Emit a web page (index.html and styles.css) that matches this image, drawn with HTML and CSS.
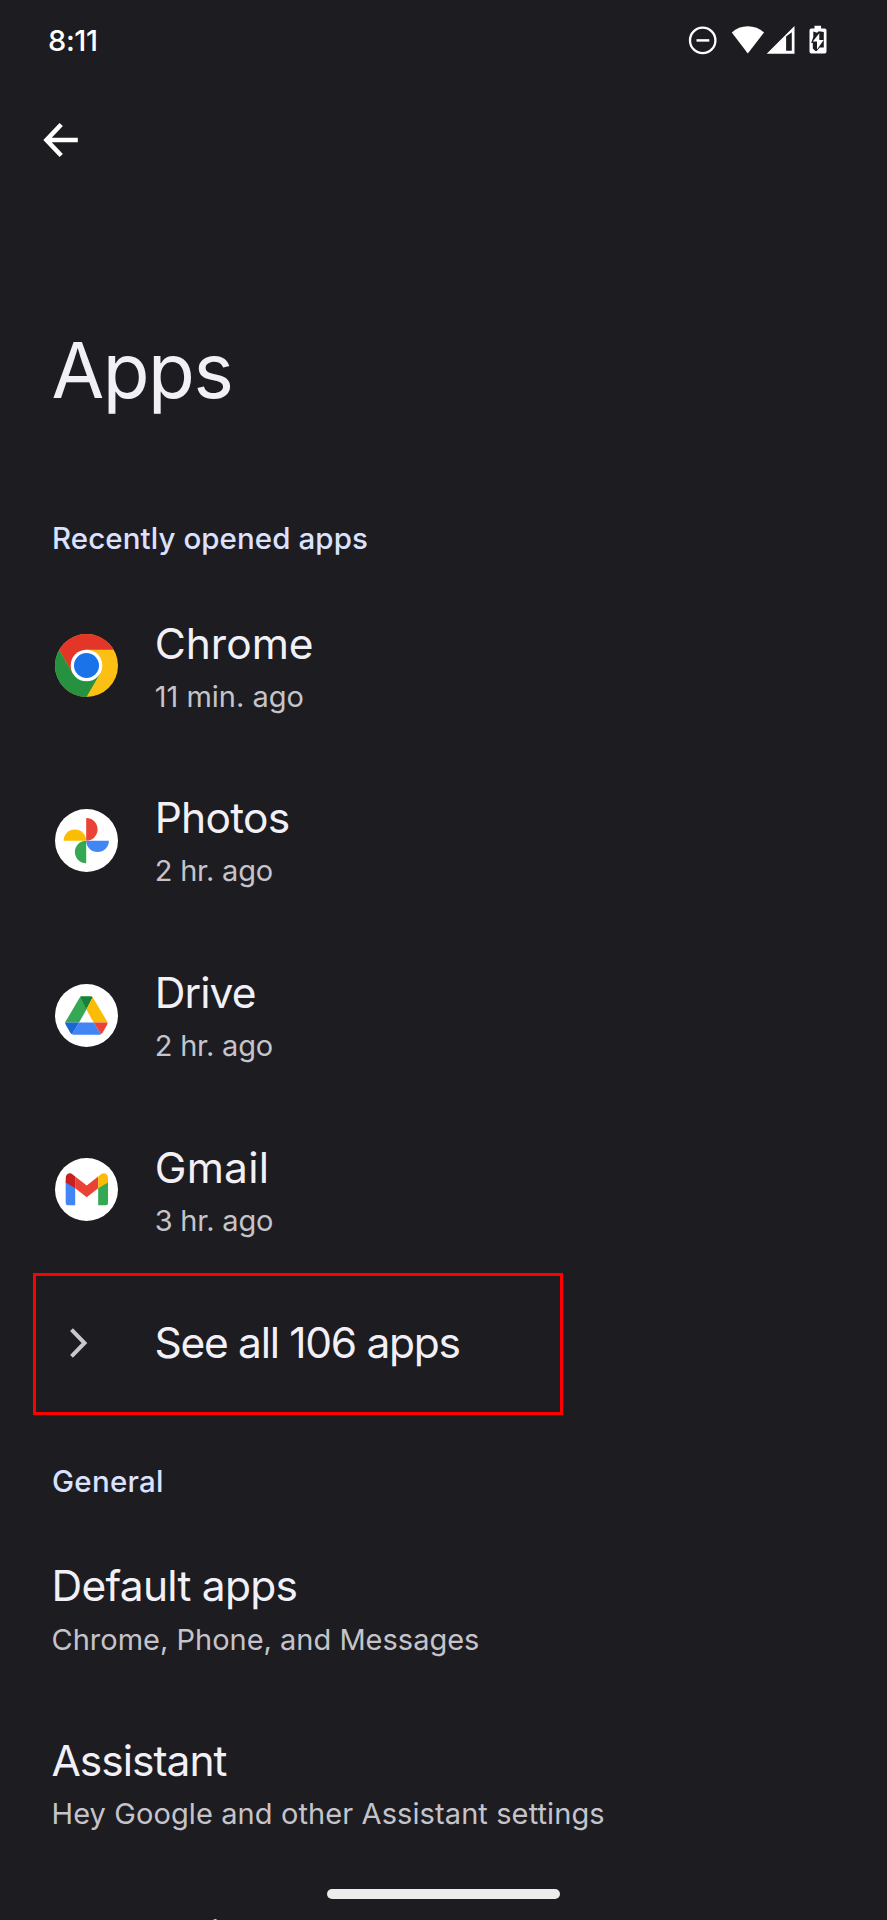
FILE: index.html
```html
<!DOCTYPE html>
<html lang="en">
<head>
<meta charset="utf-8">
<title>Apps</title>
<link rel="stylesheet" href="styles.css">
</head>
<body>
<div class="screen">
  <header class="status">
    <span class="clock">8:11</span>
    <svg class="status-icons" width="139" height="30" viewBox="-0.5 0 139 30">
      <circle cx="14.2" cy="15.4" r="12.7" fill="none" stroke="#fff" stroke-width="2.3"/>
      <path d="M8 15.4h12.8" stroke="#fff" stroke-width="2.5"/>
      <path d="M43.3 7.5Q50 1.2 59.3 1.2T75.5 7.5L59.3 28.4Z" fill="#fff"/>
      <path fill-rule="evenodd" d="M78.2 28.700L106 1V28.700ZM97.600 11.500V25.800H103.300V7.200Z" fill="#fff"/>
      <path fill-rule="evenodd" d="M126 .8h6.600v2.700h3.600q1.800 0 1.800 1.800v21.500q0 1.800-1.800 1.800h-13.400q-1.800 0-1.800-1.800V5.300q0-1.800 1.800-1.800h3.200ZM124.800 6.400V12L122.700 18h1.600v5.600l2.600 2.400h1.400l3-3.400h4V7l-5-.8-1.800 1.600Z" fill="#fff"/>
      <path d="M130.800 8.200L124.300 16.600h4.200v8l6.700-9.600h-4.400Z" fill="#fff"/>
    </svg>
  </header>
  <nav class="appbar">
    <svg width="36" height="36" viewBox="0 0 36 36" fill="none" stroke="#fff" stroke-width="4.6">
      <path d="M18.2 2.5L3.500 18l14.700 15.500M3.500 18H34.800"/>
    </svg>
  </nav>
  <h1 class="title">Apps</h1>
  <h2 class="label recent">Recently opened apps</h2>
  <main>
    <div class="row">
      <svg class="icon" viewBox="0 0 63 63">
        <circle cx="31.5" cy="31.5" r="31.5" fill="#fcc014"/>
        <path d="M4.2 15.8A31.5 31.5 0 0 1 58.8 15.8H31.5L17.9 39.4Z" fill="#e33629"/>
        <path d="M4.2 15.8A31.5 31.5 0 0 0 31.5 63L45.1 39.4H17.9Z" fill="#269240"/>
        <circle cx="31.5" cy="31.5" r="15.8" fill="#fff"/>
        <circle cx="31.5" cy="31.5" r="12.5" fill="#1a73e8"/>
      </svg>
      <div class="text"><div class="name">Chrome</div><div class="sub">11 min. ago</div></div>
    </div>
    <div class="row">
      <svg class="icon" viewBox="0 0 63 63">
        <circle cx="31.5" cy="31.5" r="31.5" fill="#fff"/>
        <path d="M31.2 9A11.3 11.3 0 0 1 31.2 31.7Z" fill="#ea4335"/>
        <path d="M53.9 31.7A11.3 11.3 0 0 1 31.2 31.7Z" fill="#4285f4"/>
        <path d="M31.2 54.3A11.3 11.3 0 0 1 31.2 31.7Z" fill="#34a853"/>
        <path d="M8.6 31.7A11.3 11.3 0 0 1 31.2 31.7Z" fill="#fbbc04"/>
      </svg>
      <div class="text"><div class="name tight">Photos</div><div class="sub hours">2 hr. ago</div></div>
    </div>
    <div class="row">
      <svg class="icon" viewBox="0 0 63 63">
        <circle cx="31.5" cy="31.5" r="31.5" fill="#fff"/>
        <path d="M10 38.6L24.3 14.2Q25.4 12.3 27 12.3L31.4 25.6L24 38.6Z" fill="#34a853"/>
        <path d="M25.3 12.8Q26 12.3 27.5 12.3H35.5Q37 12.3 37.7 13.2L31.4 25.6Z" fill="#188038"/>
        <path d="M37.7 13.2L51.5 36.5Q52.5 38.6 52.5 38.6H38.7L31.4 25.6Z" fill="#fbbc04"/>
        <path d="M24 38.6H38.7L46 50.2Q45 50.8 43.5 50.8H19.5Q18 50.8 17 50.2Z" fill="#4285f4"/>
        <path d="M10 38.6H24L17 50.2Q15.8 49.5 15.2 48.5L11 41.3Q10 39.5 10 38.6Z" fill="#1967d2"/>
        <path d="M38.7 38.6H52.5Q52.5 40 51.8 41.3L47.7 48.5Q47 49.7 46 50.2Z" fill="#ea4335"/>
      </svg>
      <div class="text"><div class="name drive">Drive</div><div class="sub hours">2 hr. ago</div></div>
    </div>
    <div class="row">
      <svg class="icon" viewBox="0 0 63 63">
        <circle cx="31.5" cy="31.5" r="31.5" fill="#fff"/>
        <path d="M10.7 23L20.2 30V47.3H13.2Q10.7 47.3 10.7 44.8Z" fill="#4285f4"/>
        <path d="M43.2 30L53 23V44.8Q53 47.3 50.5 47.3H43.2Z" fill="#34a853"/>
        <path d="M20.2 18.4L31.7 27.5L43.2 18.4V30.3L31.7 39.2L20.2 30.3Z" fill="#ea4335"/>
        <path d="M20.2 18.4V30.3L10.7 24.5V20.2C10.7 15.5 15 14 18 16.7Z" fill="#c5221f"/>
        <path d="M43.2 18.4V30.3L53 24.5V20.2C53 15.5 48.5 14 45.4 16.7Z" fill="#fbbc04"/>
      </svg>
      <div class="text"><div class="name gmail">Gmail</div><div class="sub hours">3 hr. ago</div></div>
    </div>
    <div class="row see-all">
      <svg class="chevron" width="20" height="30" viewBox="0 0 20 30" fill="none" stroke="#c9c7cf" stroke-width="4">
        <path d="M2.5 1.7L15.5 15L2.5 28.3"/>
      </svg>
      <div class="name">See all 106 apps</div>
    </div>
    <h2 class="label general">General</h2>
    <div class="row plain">
      <div class="text"><div class="name tight">Default apps</div><div class="sub">Chrome, Phone, and Messages</div></div>
    </div>
    <div class="row plain">
      <div class="text"><div class="name assistant">Assistant</div><div class="sub wide">Hey Google and other Assistant settings</div></div>
    </div>
    <div class="row plain">
      <div class="text"><div class="name screen-time">Screen time</div><div class="sub">&nbsp;</div></div>
    </div>
  </main>
  <div class="highlight"></div>
  <div class="gesture-bar"></div>
</div>
</body>
</html>
```

FILE: styles.css
```css
* { box-sizing: border-box; }

body { margin: 0; background: #1d1c21; }

.screen {
  position: relative;
  width: 887px;
  height: 1920px;
  overflow: hidden;
  background: #1d1c21;
  color: #f2f0f7;
  font-family: Inter, Roboto, sans-serif;
}

.status {
  display: flex;
  justify-content: space-between;
  align-items: center;
  height: 80px;
  padding: 0 60px 0 48px;
}

.clock {
  margin-top: 1px;
  color: #fff;
  font-size: 29px;
  font-weight: 500;
  letter-spacing: -0.36px;
  line-height: 40px;
}

.appbar {
  display: flex;
  align-items: center;
  height: 120px;
  padding-left: 43px;
}

.title {
  margin: 125px 0 0 51.5px;
  font-size: 76.5px;
  font-weight: 400;
  line-height: 90px;
  letter-spacing: -1.5px;
}

.label {
  margin: 0 0 0 52px;
  color: #dae2ff;
  font-size: 29.5px;
  font-weight: 500;
  line-height: 40px;
}

.recent {
  margin-top: 103.4px;
  margin-bottom: 21.1px;
  letter-spacing: 0.08px;
}

.general {
  margin-top: 54px;
  margin-bottom: 21.1px;
  letter-spacing: 0.25px;
}

.row {
  display: flex;
  align-items: center;
  height: 174.7px;
  padding-left: 54.8px;
}

.plain { padding-left: 51.5px; }

.icon {
  flex: none;
  width: 63px;
  height: 63px;
  margin: -2px 36.9px 0 0;
}

.name {
  padding-top: 0.6px;
  font-size: 42.5px;
  line-height: 52px;
  white-space: nowrap;
}

.sub {
  margin-top: 7.1px;
  color: #c5c4cb;
  font-size: 29px;
  line-height: 40px;
  white-space: nowrap;
}

.tight { letter-spacing: -0.75px; }
.drive { letter-spacing: -0.92px; }
.gmail { letter-spacing: 0.23px; }
.assistant { letter-spacing: -1px; }
.screen-time { letter-spacing: -1.1px; }
.hours { letter-spacing: -0.2px; }
.wide { letter-spacing: 0.1px; }

.see-all { height: 129px; padding-left: 69px; }
.see-all .name { padding-top: 0; letter-spacing: -1.3px; }
.chevron { flex: none; margin-right: 65.5px; }

.highlight {
  position: absolute;
  left: 33px;
  top: 1273px;
  width: 530px;
  height: 142px;
  border: 3px solid #f00;
}

.gesture-bar {
  position: absolute;
  left: 327px;
  top: 1889px;
  width: 233px;
  height: 10px;
  border-radius: 5px;
  background: #ececec;
}
```
